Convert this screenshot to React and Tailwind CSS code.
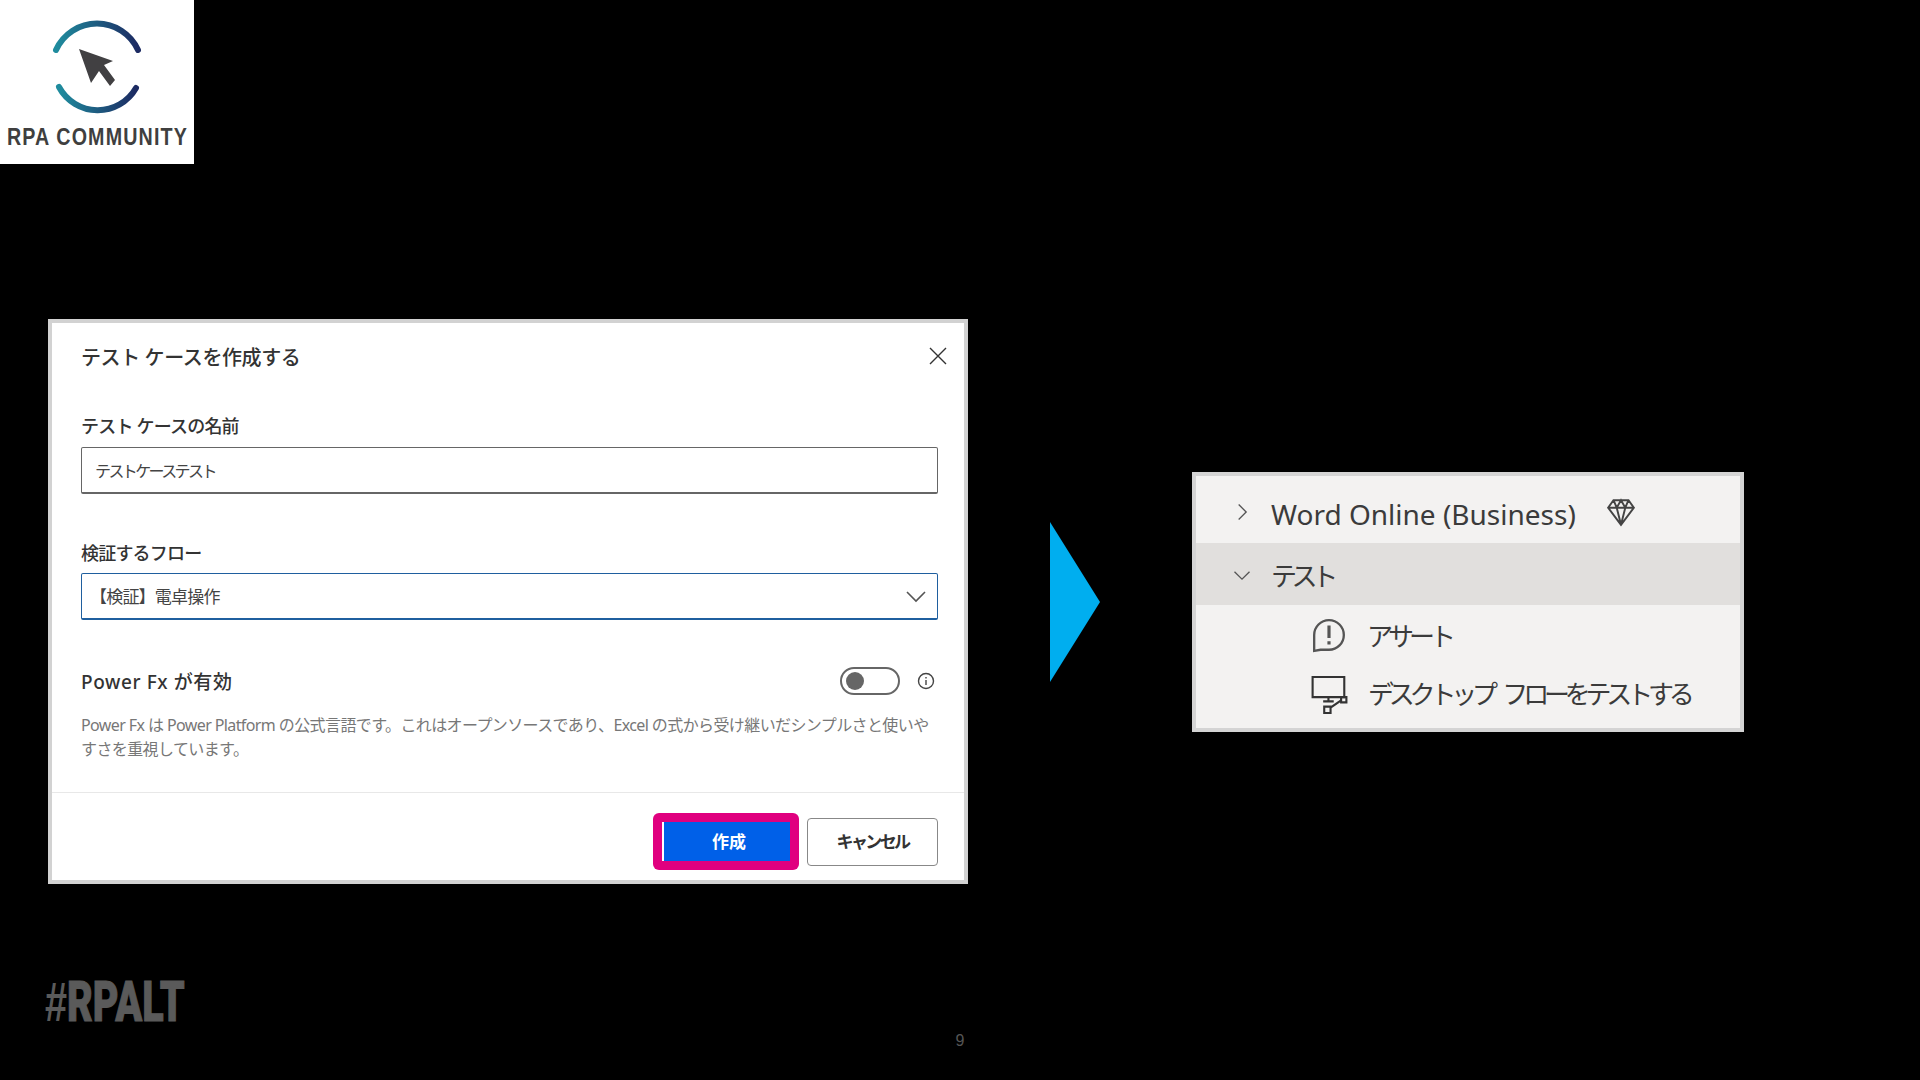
import React from "react";

const jp = "font-['Noto_Sans','Noto_Sans_CJK_JP',sans-serif]";

const Logo = () => (
  <div className="w-[194px] h-[164px] bg-white flex flex-col items-center">
    <svg width="194" height="122" viewBox="0 0 194 122" fill="none" className="shrink-0">
      <defs>
        <linearGradient id="ring" x1="0" x2="1" y1="0" y2="0">
          <stop offset="0" stopColor="#1f8c9e" />
          <stop offset="1" stopColor="#1c2a62" />
        </linearGradient>
      </defs>
      <path d="M56 50A45 45 0 0 1 138 50" stroke="url(#ring)" strokeWidth="6" strokeLinecap="round" />
      <path d="M59 87A44 44 0 0 0 136 88" stroke="url(#ring)" strokeWidth="6" strokeLinecap="round" />
      <path d="M79 49L113 61L104 65L115 80L110 86L99 71L91 83Z" fill="#414042" />
    </svg>
    <div className="mt-[2px] font-['Liberation_Sans',sans-serif] font-bold text-[24px] leading-[26px] tracking-[1.4px] text-[#3f3f3f] whitespace-nowrap scale-x-[0.82]">
      RPA COMMUNITY
    </div>
  </div>
);

const Chevron = ({ d, size = 24, color = "#555" }) => (
  <svg width={size} height={size} viewBox="0 0 24 24" fill="none" stroke={color} strokeWidth="1.6" className="shrink-0">
    <path d={d} />
  </svg>
);

const Dialog = () => (
  <div className={`w-[920px] h-[565px] bg-white border-4 border-[#d2d2d2] flex flex-col shrink-0 ${jp}`}>
    <div className="flex-1 pl-[29px] pr-[26px]">
      <div className="flex items-center justify-between h-[68px] pt-[2px]">
        <div className="text-[20px] font-medium text-[#333] tracking-[-0.4px]">テスト ケースを作成する</div>
        <svg width="18" height="18" viewBox="0 0 18 18" stroke="#333" strokeWidth="1.4" className="mr-[-9px] mb-[4px]">
          <path d="M1 1L17 17M17 1L1 17" />
        </svg>
      </div>
      <div className="text-[18px] leading-[26px] font-medium text-[#333] mt-[22px] tracking-[-0.8px]">テスト ケースの名前</div>
      <div className="mt-[8px] h-[47px] border border-b-2 border-[#666] rounded-[2px] flex items-center pl-[13px] pt-[1px] text-[16px] text-[#444] tracking-[-2.6px]">
        テストケーステスト
      </div>
      <div className="text-[18px] leading-[26px] font-medium text-[#333] mt-[46px] tracking-[-0.8px]">検証するフロー</div>
      <div className="mt-[7px] h-[47px] border border-b-2 border-[#1f5f9f] rounded-[2px] flex items-center justify-between pl-[8px] pr-[9px] pt-[2px] text-[17px] text-[#444] tracking-[-0.8px]">
        <span>【検証】電卓操作</span>
        <Chevron d="M3 7L12 16L21 7" size={24} />
      </div>
      <div className="flex items-center justify-between mt-[47px] h-[28px]">
        <div className="text-[19px] mt-[2px] font-medium text-[#333] tracking-[0.6px]">Power Fx が有効</div>
        <div className="flex items-center">
          <div className="w-[60px] h-[28px] rounded-full border-2 border-[#666] flex items-center pl-[4px]">
            <div className="w-[18px] h-[18px] rounded-full bg-[#666]" />
          </div>
          <svg width="18" height="18" viewBox="0 0 18 18" fill="none" stroke="#444" strokeWidth="1.4" className="ml-[17px] mr-[3px]">
            <circle cx="9" cy="9" r="7.5" />
            <path d="M9 8V13M9 5V6.5" />
          </svg>
        </div>
      </div>
      <p className="mt-[18px] text-[16px] leading-[24px] text-[#777] tracking-[-0.6px]">
        Power Fx は Power Platform の公式言語です。これはオープンソースであり、Excel の式から受け継いだシンプルさと使いやすさを重視しています。
      </p>
    </div>
    <div className="h-[88px] pt-[10px] border-t border-[#e8e8e8] flex items-center justify-end pr-[26px] gap-[8px]">
      <div className="w-[146px] h-[57px] rounded-[6px] bg-[#e0007f] p-[9px]">
        <div className="h-full bg-[#0060e8] border-l-2 border-white flex items-center justify-center pl-[4px] text-[17px] font-bold text-white">
          作成
        </div>
      </div>
      <div className="w-[131px] h-[48px] rounded-[4px] border border-[#888] flex items-center justify-center text-[17px] font-bold text-[#333] tracking-[-2.6px]">
        キャンセル
      </div>
    </div>
  </div>
);

const Arrow = () => (
  <svg width="50" height="160" viewBox="0 0 50 160" className="ml-[82px] shrink-0">
    <path d="M0 0L50 80L0 160Z" fill="#00aeef" />
  </svg>
);

const Panel = () => (
  <div className={`w-[552px] h-[260px] ml-[92px] bg-[#f3f2f1] border-4 border-[#d4d4d4] flex flex-col shrink-0 text-[#3b3b3b] ${jp}`}>
    <div className="h-[67px] pt-[6px] flex items-center pl-[36px]">
      <Chevron d="M8 3L17 12L8 21" size={20} />
      <span className="ml-[19px] mt-[3px] text-[28px] whitespace-nowrap">Word Online (Business)</span>
      <svg width="30" height="30" viewBox="0 0 28 28" fill="none" stroke="#444" strokeWidth="1.8" className="ml-[30px]">
        <path d="M7 3H21L26 10L14 26L2 10ZM2 10H26M10 10L14 26L18 10M7 3L10 10L14 3L18 10L21 3" />
      </svg>
    </div>
    <div className="h-[62px] bg-[#e1dfdd] flex items-center pl-[36px] pt-[3px]">
      <Chevron d="M3 8L12 17L21 8" size={20} />
      <span className="ml-[19px] mt-[3px] text-[26px] tracking-[-5.4px]">テスト</span>
    </div>
    <div className="h-[59px] pt-[4px] flex items-center pl-[115px]">
      <svg width="36" height="36" viewBox="0 0 32 34" fill="none" stroke="#555" strokeWidth="2.2" className="shrink-0">
        <path d="M2 31V16A14 14 0 1 1 16 30H8Z" />
        <path d="M16 7V19M16 22V25" strokeWidth="3" />
      </svg>
      <span className="ml-[20px] text-[26px] tracking-[-5px]">アサート</span>
    </div>
    <div className="flex-1 flex items-center pl-[115px] pb-[2px]">
      <svg width="37" height="38" viewBox="0 0 34 36" fill="none" stroke="#333" strokeWidth="2" className="shrink-0">
        <path d="M1 1H31V20H1Z" />
        <path d="M16 20V24M11 24H21M12 29H18V35H12ZM18 30L28 23" />
        <path d="M28 20H33V25H28Z" />
      </svg>
      <span className="ml-[20px] text-[26px] tracking-[-5.2px] [word-spacing:8px] whitespace-nowrap">デスクトップ フローをテストする</span>
    </div>
  </div>
);

const Footer = () => (
  <div className="mt-[97px] flex items-start pl-[45px]">
    <div className="w-[870px] h-[38px] text-[55px] leading-[38px] text-[#5a5a5a] origin-left scale-x-[0.72] whitespace-nowrap">
      <span className="font-['Liberation_Sans',sans-serif] font-bold">#</span>
      <span className="font-['Roboto',sans-serif] font-black [-webkit-text-stroke:1px_#5a5a5a]">RPALT</span>
    </div>
    <div className="w-[90px] mt-[50px] text-center text-[16px] leading-[20px] text-[#555] font-['Liberation_Sans',sans-serif]">9</div>
  </div>
);

export default function App() {
  return (
    <div className="w-[1920px] h-[1080px] bg-black overflow-hidden flex flex-col">
      <Logo />
      <div className="mt-[155px] pl-[48px] flex items-center">
        <Dialog />
        <Arrow />
        <Panel />
      </div>
      <Footer />
    </div>
  );
}
